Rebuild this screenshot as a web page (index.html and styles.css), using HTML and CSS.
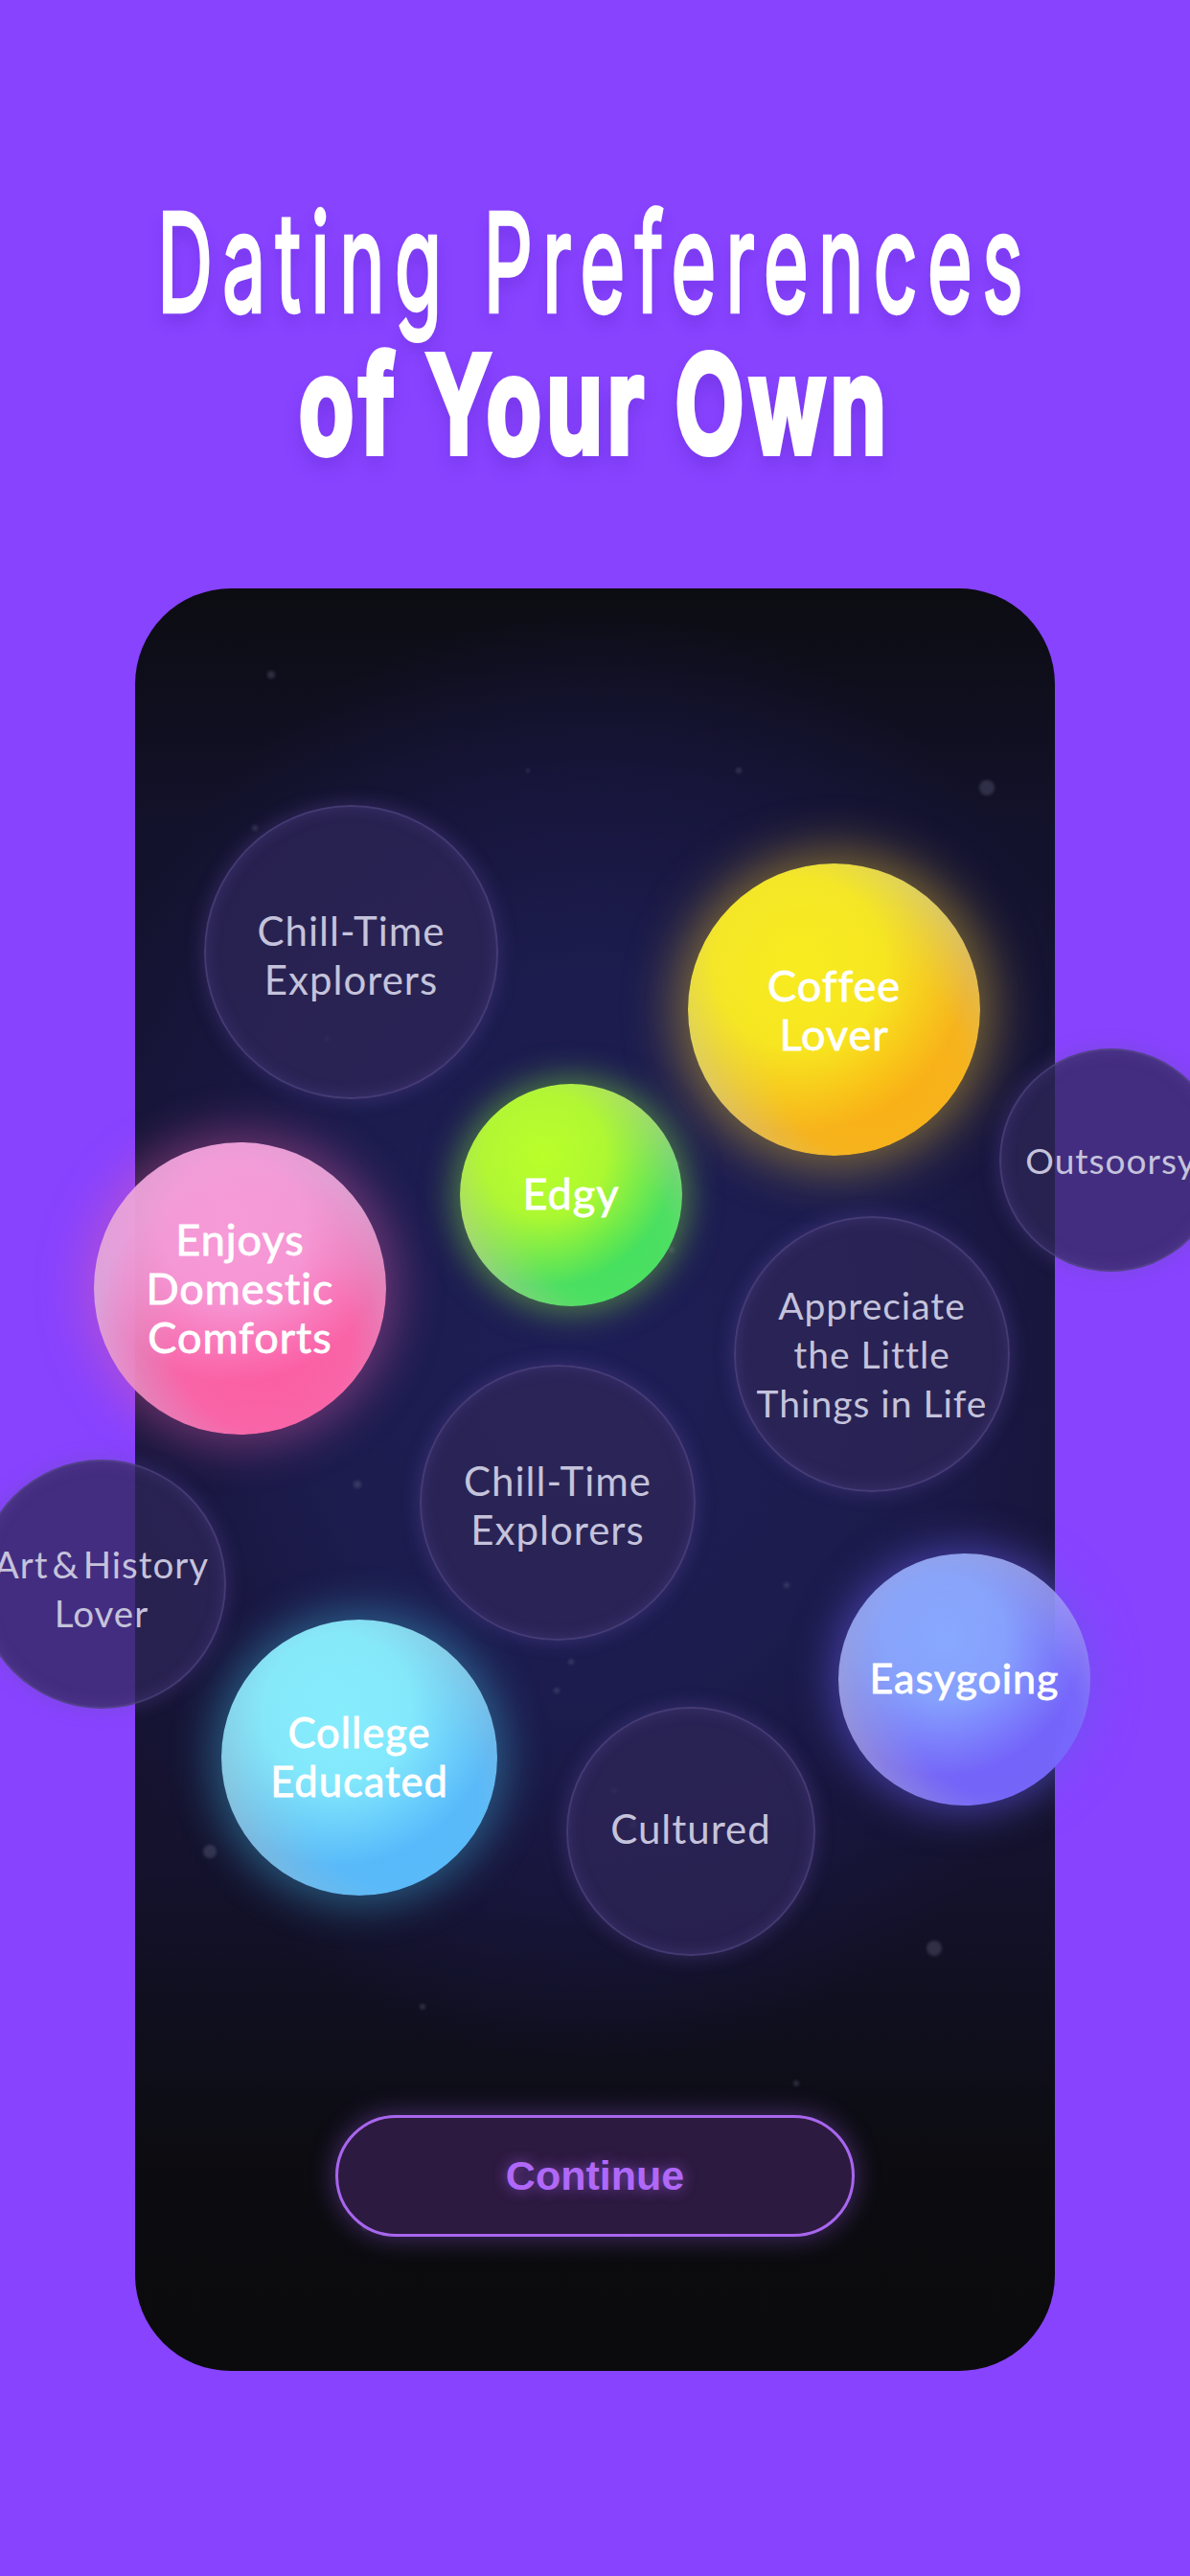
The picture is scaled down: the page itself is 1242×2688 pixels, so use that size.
FILE: index.html
```html
<!DOCTYPE html>
<html lang="en">
<head>
<meta charset="utf-8">
<title>Dating Preferences of Your Own</title>
<link rel="stylesheet" href="styles.css">
</head>
<body>
<main class="page">
  <h1 class="title">
    <span class="title-line title-light">Dating Preferences</span>
    <span class="title-line title-heavy">of Your Own</span>
  </h1>
  <section class="phone">
    <svg class="stars" viewBox="0 0 960 1860" aria-hidden="true">
      <g class="star-soft">
        <circle cx="889" cy="208" r="8"/><circle cx="834" cy="1419" r="8"/><circle cx="78" cy="1318" r="7"/>
        <circle cx="142" cy="90" r="4"/><circle cx="232" cy="935" r="4"/><circle cx="310" cy="1310" r="3"/>
        <circle cx="440" cy="1150" r="3"/><circle cx="680" cy="1040" r="3"/><circle cx="520" cy="1290" r="4"/>
        <circle cx="455" cy="1120" r="3"/><circle cx="630" cy="190" r="3"/><circle cx="690" cy="1560" r="3"/>
        <circle cx="500" cy="1255" r="3"/><circle cx="325" cy="1240" r="3"/><circle cx="125" cy="250" r="3"/>
        <circle cx="565" cy="600" r="3"/><circle cx="560" cy="690" r="3"/><circle cx="270" cy="350" r="3"/>
        <circle cx="700" cy="420" r="3"/><circle cx="300" cy="1480" r="3"/><circle cx="775" cy="1160" r="3"/>
        <circle cx="410" cy="190" r="2"/><circle cx="240" cy="1710" r="3"/><circle cx="240" cy="1130" r="2"/>
        <circle cx="200" cy="470" r="3"/><circle cx="60" cy="700" r="2"/>
      </g>
    </svg>

    <div class="bubble dim b-chill1"><span>Chill-Time<br>Explorers</span></div>
    <div class="bubble bright b-coffee"><span>Coffee<br>Lover</span></div>
    <div class="bubble bright b-edgy"><span>Edgy</span></div>
    <div class="bubble dim b-outdoorsy"><span>Outsoorsy</span></div>
    <div class="bubble bright b-enjoys"><span>Enjoys<br>Domestic<br>Comforts</span></div>
    <div class="bubble dim b-appreciate"><span>Appreciate<br>the Little<br>Things in Life</span></div>
    <div class="bubble dim b-chill2"><span>Chill-Time<br>Explorers</span></div>
    <div class="bubble dim b-art"><span class="tight">Art &amp; History<br>Lover</span></div>
    <div class="bubble bright b-easy"><span>Easygoing</span></div>
    <div class="bubble bright b-college"><span>College<br>Educated</span></div>
    <div class="bubble dim b-cultured"><span>Cultured</span></div>

    <button class="continue" type="button">Continue</button>
  </section>
</main>
</body>
</html>
```
FILE: styles.css
```css
* { box-sizing: border-box; }
html, body { margin: 0; padding: 0; }
body {
  width: 1242px;
  height: 2688px;
  overflow: hidden;
  background: #8843ff;
}
.page {
  height: 2688px;
  overflow: hidden;
  display: flex;
  flex-direction: column;
  align-items: center;
  padding-top: 200px;
}
.title {
  margin: 0;
  display: flex;
  flex-direction: column;
  align-items: center;
  color: #fff;
  font-family: Inter, "Liberation Sans", Arial, sans-serif;
  font-weight: 400;
}
.title-line {
  display: block;
  height: 148px;
  line-height: 148px;
  white-space: nowrap;
}
.title-light {
  font-size: 80px;
  letter-spacing: 10.5px;
  transform: scaleY(1.775);
  -webkit-text-stroke: 2.4px #fff;
  text-shadow: 0 6px 12px rgba(70, 20, 170, .28);
}
.title-heavy {
  font-size: 94px;
  font-weight: 700;
  letter-spacing: 5px;
  transform: scaleY(1.51);
  -webkit-text-stroke: 4px #fff;
  text-shadow: 0 8px 16px rgba(70, 20, 170, .28);
}

.phone {
  position: relative;
  margin-top: 118px;
  width: 960px;
  height: 1860px;
  flex: none;
  border-radius: 100px;
  background:
    radial-gradient(ellipse 600px 760px at 50% 42%, #1e1e56 0%, #1c1c4e 50%, rgba(26, 24, 70, .65) 75%, rgba(20, 18, 46, 0) 100%),
    linear-gradient(180deg, #0c0c12 0%, #13122c 14%, #171536 50%, #14122c 72%, #0c0c11 88%, #0b0b0d 100%);
}
.stars { position: absolute; inset: 0; width: 100%; height: 100%; border-radius: 100px; }
.star-soft { fill: rgba(120, 120, 150, .3); filter: blur(1.5px); }

.bubble {
  position: absolute;
  border-radius: 50%;
  display: flex;
  align-items: center;
  justify-content: center;
  text-align: center;
  font-family: Lato, "Liberation Sans", sans-serif;
  font-size: 42px;
  line-height: 51px;
  letter-spacing: 1px;
  white-space: nowrap;
}
.dim {
  color: #c5c3db;
  background: rgba(46, 38, 88, .76);
  border: 2px solid rgba(98, 84, 150, .5);
  box-shadow: 0 0 18px 3px rgba(104, 78, 170, .3), inset 0 0 16px rgba(110, 90, 180, .25);
}
.bright { color: #fff; font-size: 43.5px; -webkit-text-stroke: .8px #fff; }
.tight { word-spacing: -7px; }

.b-chill1 { left: 72px; top: 226px; width: 307px; height: 307px; padding-top: 6px; }
.b-coffee {
  left: 577px; top: 287px; width: 305px; height: 305px;
  font-size: 45px;
  background:
    radial-gradient(circle at 38% 34%, #f8ec20 0%, rgba(247, 234, 32, .92) 32%, rgba(247, 234, 32, 0) 64%),
    radial-gradient(circle at 62% 68%, #fbae12 0%, rgba(250, 178, 20, .92) 34%, rgba(250, 178, 20, 0) 66%),
    rgba(222, 205, 130, .94);
  box-shadow: 0 0 50px 14px rgba(214, 176, 40, .5);
}
.b-edgy {
  left: 339px; top: 517px; width: 232px; height: 232px;
  padding-bottom: 4px;
  font-size: 45px;
  background:
    radial-gradient(circle at 38% 32%, #baff2a 0%, rgba(180, 250, 45, .92) 30%, rgba(180, 250, 45, 0) 64%),
    radial-gradient(circle at 64% 68%, #40e05c 0%, rgba(70, 225, 95, .92) 32%, rgba(70, 225, 95, 0) 66%),
    rgba(170, 215, 140, .95);
  box-shadow: 0 0 32px 8px rgba(120, 210, 60, .5);
}
.b-outdoorsy { left: 902px; top: 480px; width: 233px; height: 233px; font-size: 37px; }
.b-enjoys {
  left: -43px; top: 578px; width: 305px; height: 305px;
  font-size: 45px;
  background:
    radial-gradient(circle at 48% 30%, #f79ad8 0%, rgba(246, 156, 218, .88) 28%, rgba(246, 156, 218, 0) 60%),
    radial-gradient(circle at 58% 68%, #fd5aa0 0%, rgba(252, 96, 165, .92) 34%, rgba(252, 96, 165, 0) 66%),
    rgba(226, 170, 215, .92);
  box-shadow: 0 0 48px 12px rgba(225, 90, 170, .42);
}
.b-appreciate { left: 625px; top: 655px; width: 288px; height: 288px; font-size: 39px; }
.b-chill2 { left: 297px; top: 810px; width: 288px; height: 288px; padding-top: 6px; }
.b-art { left: -165px; top: 909px; width: 260px; height: 260px; padding-top: 9px; font-size: 38.5px; }
.b-easy {
  left: 734px; top: 1007px; width: 263px; height: 263px;
  padding-bottom: 4px;
  font-size: 43px;
  background:
    radial-gradient(circle at 42% 34%, #88a8fe 0%, rgba(136, 168, 254, .88) 28%, rgba(136, 168, 254, 0) 62%),
    radial-gradient(circle at 62% 64%, #7260fc 0%, rgba(114, 98, 252, .92) 36%, rgba(114, 98, 252, 0) 70%),
    rgba(175, 170, 235, .86);
  box-shadow: 0 0 42px 8px rgba(100, 90, 235, .55);
}
.b-college {
  left: 90px; top: 1076px; width: 288px; height: 288px;
  padding-bottom: 2px;
  background:
    radial-gradient(circle at 42% 32%, #86edfd 0%, rgba(134, 236, 252, .92) 30%, rgba(134, 236, 252, 0) 64%),
    radial-gradient(circle at 62% 66%, #55b8fd 0%, rgba(86, 186, 252, .92) 34%, rgba(86, 186, 252, 0) 66%),
    rgba(140, 195, 225, .95);
  box-shadow: 0 0 44px 10px rgba(60, 175, 215, .45);
}
.b-cultured { left: 450px; top: 1167px; width: 260px; height: 260px; padding-bottom: 5px; }

.continue {
  position: absolute;
  left: 209px;
  top: 1593px;
  width: 542px;
  height: 127px;
  padding: 0;
  border: 3px solid #a866ee;
  border-radius: 64px;
  background: #2d1a40;
  color: #b068f8;
  font-family: "Liberation Sans", Arial, sans-serif;
  font-weight: 700;
  font-size: 43px;
  text-shadow: 0 0 14px rgba(170, 100, 250, .6);
  box-shadow: 0 0 26px 2px rgba(150, 90, 230, .4);
}
```
